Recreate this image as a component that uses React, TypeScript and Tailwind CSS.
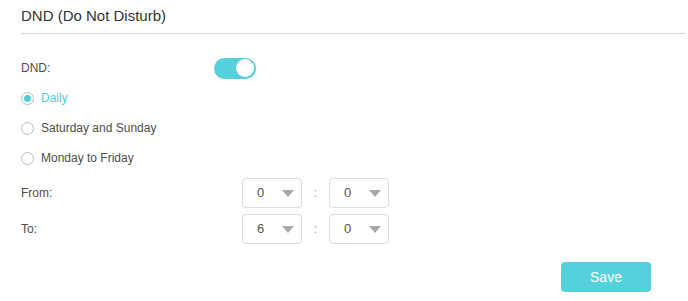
import React from "react";

const Select = ({ value }: { value: string }) => (
  <div className="flex h-[30px] w-[60px] items-center justify-between rounded-[4px] border border-[#dcdcdc] bg-white pl-[14px] pr-[7px] text-[13px] text-[#555]">
    <span>{value}</span>
    <svg width="12" height="7" viewBox="0 0 12 7">
      <path d="M0 0 L12 0 L6 7 Z" fill="#a8a8a8" />
    </svg>
  </div>
);

const Radio = ({ label, checked }: { label: string; checked?: boolean }) => (
  <div className="flex h-[30px] items-center">
    <span className="flex h-[13px] w-[13px] items-center justify-center rounded-full border border-[#bdbdbd] bg-white">
      {checked && <span className="h-[7px] w-[7px] rounded-full bg-[#4fcdd8]" />}
    </span>
    <span className={"ml-[7px] text-[12px] " + (checked ? "text-[#4fcdd8]" : "text-[#4d4d4d]")}>{label}</span>
  </div>
);

export default function App() {
  return (
    <div
      className="h-[301px] w-[688px] bg-white pl-[21px] pr-[3px]"
      style={{ fontFamily: '"Liberation Sans", Arial, sans-serif' }}
    >
      <div className="flex h-[34px] items-center border-b border-[#d6d6d6] pb-[1px] text-[15px] text-[#333]">
        DND (Do Not Disturb)
      </div>
      <div className="mt-[24px] flex h-[20px] items-center">
        <span className="w-[193px] text-[12px] text-[#4d4d4d]">DND:</span>
        <div className="flex h-[21px] w-[42px] items-center justify-end rounded-full bg-[#56d0da] pr-[2px]">
          <span className="h-[18px] w-[18px] rounded-full bg-white" />
        </div>
      </div>
      <div className="mt-[5px] flex flex-col">
        <Radio label="Daily" checked />
        <Radio label="Saturday and Sunday" />
        <Radio label="Monday to Friday" />
      </div>
      <div className="mt-[5px] flex h-[30px] items-center">
        <span className="w-[221px] text-[12px] text-[#4d4d4d]">From:</span>
        <Select value="0" />
        <span className="w-[27px] text-center text-[12px] text-[#999]">:</span>
        <Select value="0" />
      </div>
      <div className="mt-[6px] flex h-[30px] items-center">
        <span className="w-[221px] text-[12px] text-[#4d4d4d]">To:</span>
        <Select value="6" />
        <span className="w-[27px] text-center text-[12px] text-[#999]">:</span>
        <Select value="0" />
      </div>
      <div className="mt-[18px] flex justify-end pr-[34px]">
        <button className="h-[30px] w-[90px] rounded-[4px] bg-[#56d0da] text-[14px] text-white">Save</button>
      </div>
    </div>
  );
}
